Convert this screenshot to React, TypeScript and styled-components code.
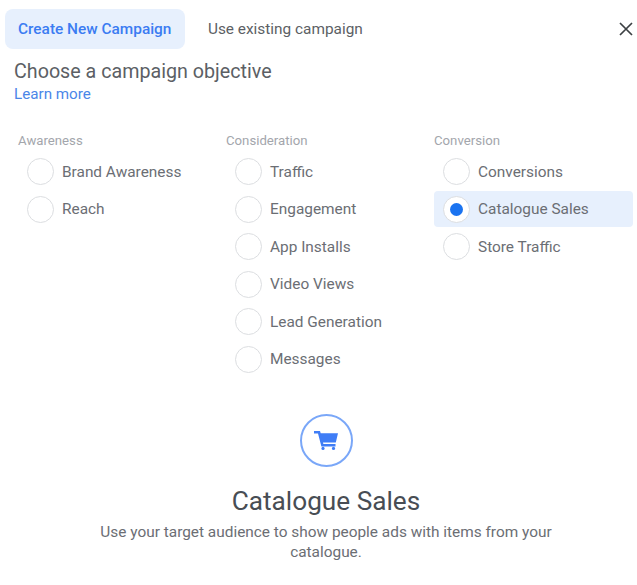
import React from "react"
import styled, { createGlobalStyle } from "styled-components"

const GlobalStyle = createGlobalStyle`
  html, body {
    margin: 0;
    background: #fff;
    font-family: Roboto, "Liberation Sans", sans-serif;
  }
`

const Page = styled.div`
  width: 637px;
  height: 585px;
  overflow: hidden;
  box-sizing: border-box;
  padding-top: 9px;
`

const TabBar = styled.div`
  display: flex;
  align-items: center;
  padding: 0 1px 0 5px;
`

const Tab = styled.div<{ $active?: boolean }>`
  height: 40px;
  display: flex;
  align-items: center;
  padding: 0 13.5px 0 13px;
  margin-right: 10px;
  border-radius: 8px;
  font-size: 15.4px;
  font-weight: ${p => (p.$active ? 500 : 400)};
  color: ${p => (p.$active ? "#3b7cf2" : "#5c5f65")};
  background: ${p => (p.$active ? "#e7f0fd" : "transparent")};
`

const CloseButton = styled.div`
  margin-left: auto;
  width: 20px;
  height: 20px;
  display: flex;
  align-items: center;
  justify-content: center;
  color: #3c4043;
`

const Intro = styled.div`
  padding: 11px 14px 0;
`

const Heading = styled.div`
  font-size: 19.7px;
  line-height: 24px;
  color: #5c5f65;
`

const LearnMore = styled.a`
  display: block;
  margin-top: -1px;
  font-size: 15.2px;
  line-height: 22px;
  color: #4a86e8;
`

const Columns = styled.div`
  display: grid;
  grid-template-columns: 208px 208px 199px;
  padding-left: 18px;
  margin-top: 29px;
`

const ColumnLabel = styled.div`
  font-size: 13.2px;
  line-height: 14px;
  color: #a3a6ac;
  margin-bottom: 5.5px;
`

const Option = styled.div<{ $selected?: boolean }>`
  height: 36px;
  margin-bottom: 1.5px;
  display: flex;
  align-items: center;
  gap: 8px;
  padding-left: 9px;
  border-radius: 4px;
  font-size: 15.4px;
  color: #6b6e74;
  background: ${p => (p.$selected ? "#e7f0fd" : "transparent")};
`

const Radio = styled.span<{ $checked?: boolean }>`
  width: 27px;
  height: 27px;
  box-sizing: border-box;
  flex: none;
  border-radius: 50%;
  border: 1.5px solid #dcdee1;
  background: #fff;
  display: flex;
  align-items: center;
  justify-content: center;

  &::after {
    content: "";
    display: ${p => (p.$checked ? "block" : "none")};
    width: 13px;
    height: 13px;
    border-radius: 50%;
    background: #1a73f0;
  }
`

const Summary = styled.div`
  display: flex;
  flex-direction: column;
  align-items: center;
  margin-top: 35.5px;
  padding-left: 15px;
  text-align: center;
`

const IconRing = styled.div`
  width: 53px;
  height: 53px;
  box-sizing: border-box;
  border-radius: 50%;
  border: 2px solid #7aa7f8;
  display: flex;
  align-items: center;
  justify-content: center;
`

const SummaryTitle = styled.div`
  font-size: 26.2px;
  line-height: 30px;
  margin-top: 19px;
  color: #484d54;
`

const SummaryText = styled.div`
  width: 480px;
  margin-top: 6px;
  font-size: 15.4px;
  line-height: 20px;
  color: #6b6e74;
`

const columns = [
  { label: "Awareness", options: ["Brand Awareness", "Reach"] },
  {
    label: "Consideration",
    options: ["Traffic", "Engagement", "App Installs", "Video Views", "Lead Generation", "Messages"],
  },
  { label: "Conversion", options: ["Conversions", "Catalogue Sales", "Store Traffic"] },
]

const selected = "Catalogue Sales"

export default function App() {
  return (
    <Page>
      <GlobalStyle />
      <TabBar>
        <Tab $active>Create New Campaign</Tab>
        <Tab>Use existing campaign</Tab>
        <CloseButton>
          <svg width="14" height="14" viewBox="0 0 14 14">
            <path d="M1 1l12 12M13 1L1 13" stroke="currentColor" strokeWidth="1.7" fill="none" />
          </svg>
        </CloseButton>
      </TabBar>
      <Intro>
        <Heading>Choose a campaign objective</Heading>
        <LearnMore>Learn more</LearnMore>
      </Intro>
      <Columns>
        {columns.map(col => (
          <div key={col.label}>
            <ColumnLabel>{col.label}</ColumnLabel>
            {col.options.map(opt => (
              <Option key={opt} $selected={opt === selected}>
                <Radio $checked={opt === selected} />
                {opt}
              </Option>
            ))}
          </div>
        ))}
      </Columns>
      <Summary>
        <IconRing>
          <svg width="24" height="19" viewBox="0 0 24 19">
            <path
              d="M0 0h6l.7 2.2H24l-2.2 9.3H8.9l.5 1.6H21.5v2.4H7.4L4 2.4H0z"
              fill="#3f7df6"
            />
            <circle cx="9" cy="17.4" r="1.6" fill="#3f7df6" />
            <circle cx="19.5" cy="17.4" r="1.6" fill="#3f7df6" />
          </svg>
        </IconRing>
        <SummaryTitle>Catalogue Sales</SummaryTitle>
        <SummaryText>
          Use your target audience to show people ads with items from your catalogue.
        </SummaryText>
      </Summary>
    </Page>
  )
}
